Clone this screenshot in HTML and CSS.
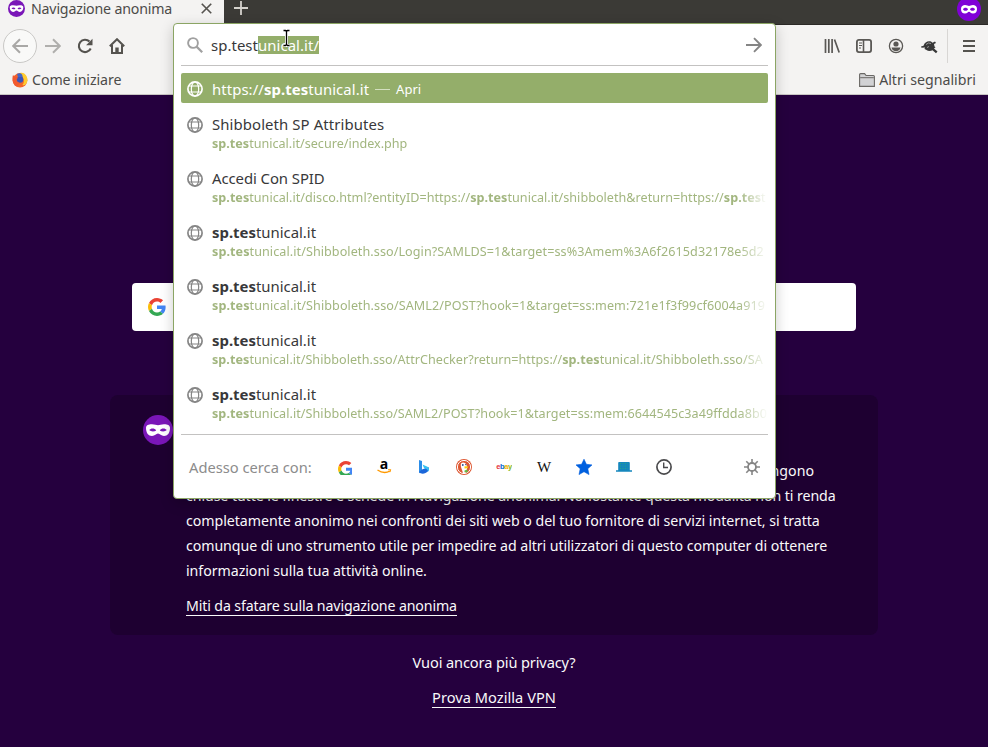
FILE: index.html
```
<!DOCTYPE html>
<html lang="it">
<head>
<meta charset="utf-8">
<title>Navigazione anonima</title>
<link rel="stylesheet" href="styles.css">
</head>
<body>
<svg class="defs" width="0" height="0">
  <symbol id="globe" viewBox="0 0 16 16"><g fill="none" stroke="currentColor" stroke-width="1.2"><circle cx="8" cy="8" r="7.1" stroke-width="1.7"/><ellipse cx="8" cy="8" rx="3.7" ry="7"/><path d="M2 5h12M2 11h12"/></g></symbol>
  <symbol id="google" viewBox="0 0 48 48"><path fill="#EA4335" d="M24 9.500c3.500 0 6.700 1.200 9.200 3.600l6.900-6.900C35.900 2.400 30.500 0 24 0 14.600 0 6.500 5.400 2.600 13.200l8 6.200C12.400 13.700 17.700 9.500 24 9.500z"/><path fill="#4285F4" d="M47 24.500c0-1.600-.2-3.100-.4-4.500H24v9h12.900c-.6 3-2.200 5.500-4.700 7.200l7.700 6C44.400 38 47 31.800 47 24.500z"/><path fill="#FBBC05" d="M10.500 28.600c-.5-1.500-.8-3-.8-4.600s.3-3.100.8-4.600l-8-6.200C.9 16.500 0 20.100 0 24s.9 7.500 2.600 10.800l7.900-6.200z"/><path fill="#34A853" d="M24 48c6.500 0 11.900-2.100 15.900-5.800l-7.700-6c-2.200 1.500-4.900 2.300-8.200 2.300-6.300 0-11.600-4.200-13.500-9.900l-7.900 6.200C6.500 42.600 14.600 48 24 48z"/></symbol>
  <symbol id="mask" viewBox="0 0 30 30"><circle cx="15" cy="15" r="15" fill="#7a16b8"/><path fill="#fff" fill-rule="evenodd" d="M3 13C3 10 6 9.200 9 9.300c2.500.1 4.500 1 6 1s3.500-.9 6-1c3-.1 6 .7 6 3.700 0 5-2.500 8-6 8-3 0-4-2.500-6-2.500S12 21 9 21c-3.500 0-6-3-6-8zM6.200 15c1.500 1.700 5 1.900 7 .4-1.500-2.500-5.200-2.600-7-.4zM23.800 15c-1.500 1.700-5 1.900-7 .4 1.500-2.500 5.200-2.600 7-.4z"/></symbol>
</svg>
<header class="chrome">
  <div class="tabs">
    <div class="tab">
      <svg class="tab-icon"><use href="#mask"/></svg>
      <span class="t-tab">Navigazione anonima</span>
      <svg class="tab-close" viewBox="0 0 10 10"><path d="M.7.7l8.600 8.600M9.300.7L.7 9.300" stroke="#55534f" stroke-width="1.500"/></svg>
    </div>
    <svg class="tab-new" viewBox="0 0 14 14"><path d="M7 0v14M0 7h14" stroke="#d5d2cd" stroke-width="1.800"/></svg>
    <svg class="private" viewBox="0 0 24 24"><circle cx="12" cy="12" r="12" fill="#8000d7"/><path fill="#fff" fill-rule="evenodd" d="M4 12c0-3 2-4 4-4s3 1 4 1 2-1 4-1 4 1 4 4-1.500 4.500-4 4.500-2.500-1.800-4-1.800-1.500 1.800-4 1.800S4 15 4 12zm2 .3c1 2 4 2 5 0-1-2-4-2-5 0zm7 0c1 2 4 2 5 0-1-2-4-2-5 0z"/></svg>
  </div>
  <div class="nav">
    <span class="back"><svg width="16" height="16" viewBox="0 0 16 16"><path d="M16 8H1.500M8 1.200L1.200 8 8 14.800" fill="none" stroke="#a9a8a6" stroke-width="2"/></svg></span>
    <svg class="i16 fwd" viewBox="0 0 16 16"><path d="M0 8h14.500M8 1.200L14.800 8 8 14.800" fill="none" stroke="#b0afad" stroke-width="2"/></svg>
    <svg class="i16 reload" viewBox="0 0 16 16"><path d="M13.700 10.500A6.200 6.200 0 1 1 12.500 3.600" fill="none" stroke="#55534f" stroke-width="2.100"/><path d="M15.500.8v6.400H9.100z" fill="#55534f"/></svg>
    <svg class="i16 home" viewBox="0 0 16 16"><path d="M.8 8.300L8 1.200l7.200 7.100M3 7v8h10V7" fill="none" stroke="#55534f" stroke-width="2"/><path d="M6.300 15V9.500h3.400V15z" fill="#55534f"/></svg>
    <div class="tools">
      <svg class="i16" viewBox="0 0 16 16"><path d="M1.500 1v14M4.800 1v14M8.100 1v14M10.500 1.500l4.700 13" fill="none" stroke="#5a5855" stroke-width="1.700"/></svg>
      <svg class="i16" viewBox="0 0 16 16"><rect x=".9" y="1.900" width="14.200" height="12.200" rx="2" fill="none" stroke="#5a5855" stroke-width="1.800"/><path d="M7.500 2v12" stroke="#5a5855" stroke-width="1.600"/><path d="M3 5h3M3 7.500h3M3 10h2" stroke="#5a5855"/></svg>
      <svg class="i16" viewBox="0 0 16 16"><circle cx="8" cy="8" r="6.600" fill="none" stroke="#5a5855" stroke-width="1.300"/><circle cx="8" cy="6" r="2.600" fill="#5a5855"/><path d="M3.500 9.500h9c-.5 2.500-2.400 3.700-4.500 3.700S4 12 3.500 9.500z" fill="#5a5855"/></svg>
      <svg class="bug" viewBox="0 0 18 16"><path fill="#383838" d="M1 8.500l2.500-.8C4.500 4 8 2.500 11 3.500l1.500 1.300 2.500-1.300 1 1.500-2 1 .5 2.500 1 .8L14 10.500l3.500 3-1.500 1.700-3.500-3c-2 1.200-4.500 1-6-.2L4.500 11l.5-1.500-3.500.3z"/><path d="M6 6.500q2.500-2.500 5-1M7 9.500l2-1" stroke="#999" fill="none"/></svg>
      <i class="bar"></i>
      <svg class="i16" viewBox="0 0 16 16"><path d="M2 3h12M2 8h12M2 13h12" stroke="#55534f" stroke-width="2"/></svg>
    </div>
  </div>
  <div class="marks">
    <svg class="i16" viewBox="0 0 16 16"><circle cx="8" cy="8.300" r="7.300" fill="#f4652b"/><path d="M8 1c4-1.500 8 3 7.400 8-.5 3-3 5-5 4 3-3 1-8-2.400-12z" fill="#ffcb2e"/><circle cx="8" cy="7.500" r="3.300" fill="#3a55b9"/><path d="M5 2C8 0 11 2 10.500 5L6 5z" fill="#4167c9"/><path d="M1 3c1 1.500 3 1.500 5 2.500L4 8.500l4 3-3.500 3C0 12 0 6 1 3z" fill="#f1592f"/></svg>
    <span class="t-come">Come iniziare</span>
    <svg class="folder" viewBox="0 0 16 14"><path d="M.6 13.400V1.600q0-1 1-1h4l1.500 1.900h7.300q1 0 1 1v9.900z" fill="#d2d2d4" stroke="#6a6865" stroke-width="1.100"/><path d="M1.200 4.700h13.600" stroke="#6a6865"/></svg>
    <span class="t-altri">Altri segnalibri</span>
  </div>
</header>
<main class="page">
  <div class="search"><svg width="18" height="18"><use href="#google"/></svg></div>
  <section class="info">
    <svg class="info-mask"><use href="#mask"/></svg>
    <div class="info-text">
      <span class="l l1">Firefox cancella la cronologia di ricerca quando viene chiuso o vengono</span>
      <span class="l l2">chiuse tutte le finestre e schede in Navigazione anonima. Nonostante questa modalità non ti renda</span>
      <span class="l l3">completamente anonimo nei confronti dei siti web o del tuo fornitore di servizi internet, si tratta</span>
      <span class="l l4">comunque di uno strumento utile per impedire ad altri utilizzatori di questo computer di ottenere</span>
      <span class="l l5">informazioni sulla tua attività online.</span>
      <a class="link t-miti">Miti da sfatare sulla navigazione anonima</a>
    </div>
  </section>
  <div class="more t-vuoi">Vuoi ancora più privacy?</div>
  <div class="more"><a class="link t-vpn">Prova Mozilla VPN</a></div>
</main>
<div class="popup">
  <div class="url">
    <svg class="i16 lens" viewBox="0 0 16 16"><circle cx="6" cy="6" r="4.900" fill="none" stroke="#a0a0a0" stroke-width="1.900"/><path d="M9.600 9.600l5.600 5.600" stroke="#a0a0a0" stroke-width="2.200"/></svg>
    <span class="typed">sp.test</span><span class="sel">unical.it/</span>
    <svg class="i16 go" viewBox="0 0 16 16"><path d="M0 8h14.500M8 1.200L14.800 8 8 14.800" fill="none" stroke="#858585" stroke-width="1.900"/></svg>
  </div>
  <div class="first"><svg class="globe"><use href="#globe"/></svg><span class="t-https">https://<b>sp.tes</b>tunical.it</span><i class="dash"></i><span class="apri">Apri</span></div>
  <div class="rows">
  <div class="row"><svg class="globe"><use href="#globe"/></svg><div class="txt"><span class="title t-shib">Shibboleth SP Attributes</span><span class="sub"><b>sp.tes</b>tunical.it/secure/index.php</span></div></div>
  <div class="row"><svg class="globe"><use href="#globe"/></svg><div class="txt"><span class="title t-spid">Accedi Con SPID</span><span class="sub u2"><b>sp.tes</b>tunical.it/disco.html?entityID=https://<b>sp.tes</b>tunical.it/shibboleth&amp;return=https://<b>sp.tes</b>t</span></div></div>
  <div class="row"><svg class="globe"><use href="#globe"/></svg><div class="txt"><span class="title"><b>sp.tes</b>tunical.it</span><span class="sub u3"><b>sp.tes</b>tunical.it/Shibboleth.sso/Login?SAMLDS=1&amp;target=ss%3Amem%3A6f2615d32178e5d2</span></div></div>
  <div class="row"><svg class="globe"><use href="#globe"/></svg><div class="txt"><span class="title"><b>sp.tes</b>tunical.it</span><span class="sub u4"><b>sp.tes</b>tunical.it/Shibboleth.sso/SAML2/POST?hook=1&amp;target=ss:mem:721e1f3f99cf6004a919</span></div></div>
  <div class="row"><svg class="globe"><use href="#globe"/></svg><div class="txt"><span class="title"><b>sp.tes</b>tunical.it</span><span class="sub u5"><b>sp.tes</b>tunical.it/Shibboleth.sso/AttrChecker?return=https://<b>sp.tes</b>tunical.it/Shibboleth.sso/SA</span></div></div>
  <div class="row"><svg class="globe"><use href="#globe"/></svg><div class="txt"><span class="title"><b>sp.tes</b>tunical.it</span><span class="sub u6"><b>sp.tes</b>tunical.it/Shibboleth.sso/SAML2/POST?hook=1&amp;target=ss:mem:6644545c3a49ffdda8b0</span></div></div>
  </div>
  <div class="engines">
    <span class="t-adesso">Adesso cerca con:</span>
    <svg viewBox="0 0 16 16"><svg x="2" y="2" width="12" height="12"><use href="#google"/></svg></svg>
    <svg viewBox="0 0 16 16"><text x="8" y="9.500" text-anchor="middle" class="amazon">a</text><path d="M1.500 11q6.500 4.500 12.500 1" fill="none" stroke="#f90" stroke-width="1.300"/><path d="M12 10.800l2.700-.2-.8 2.600" fill="none" stroke="#f90"/></svg>
    <svg viewBox="0 0 16 16"><path d="M3 1l3 1v10l-3 2.200z" fill="#2b8de8"/><path d="M3 13l3-2.500 6.500-2.500c1 3-.5 5-3 6-2.500 1.200-5 .8-6.500-1z" fill="#1b66d9"/><path d="M6.500 5.500l5 2.300c2 1.500 2 3.500.5 5 0-2-1-2.800-4-3.800z" fill="#35c1f1"/></svg>
    <svg viewBox="0 0 16 16"><circle cx="8" cy="8" r="8" fill="#de5833"/><circle cx="8" cy="8" r="6.600" fill="#de5833" stroke="#fff" stroke-width="1"/><path d="M5 4.500C6.500 2.500 10 3.500 10.500 6l.7 3-1.200 4.500-3 .7C6.500 11 4 7.500 5 4.500z" fill="#fff"/><path d="M8.500 7.300l4 .3-1.200 1.600-2.800.3z" fill="#fdd20a"/><path d="M8.500 11.500l3-1v3l-3-.5z" fill="#65bc46"/><circle cx="6.800" cy="6" r=".9" fill="#2d4f8e"/><circle cx="9.700" cy="5.600" r=".7" fill="#2d4f8e"/></svg>
    <svg viewBox="0 0 16 16"><text x="8" y="10" text-anchor="middle" class="ebay"><tspan fill="#e53238">e</tspan><tspan fill="#0064d2">b</tspan><tspan fill="#f5af02">a</tspan><tspan fill="#86b817">y</tspan></text></svg>
    <svg viewBox="0 0 16 16"><text x="8" y="13" text-anchor="middle" class="wiki">W</text></svg>
    <svg viewBox="0 0 16 16"><path d="M8 .2l2.400 5.100 5.600.6-4.200 3.800 1.200 5.900L8 12.700l-5 2.900 1.200-5.900L0 5.900l5.600-.6z" fill="#0060df" stroke="#0060df" stroke-width=".6" stroke-linejoin="round"/></svg>
    <svg viewBox="0 0 16 16"><path d="M3 3h10q.8 0 .8 1v7.300H16v1.500H0v-1.500h2.200V4q0-1 .8-1z" fill="#1587bd"/><path d="M4 4.500h8M4 7h8M4 9.500h8" stroke="#2cae7c" stroke-width=".8" stroke-dasharray="1 1.500"/></svg>
    <svg viewBox="0 0 16 16"><circle cx="8" cy="8" r="7.100" fill="none" stroke="#4a4a4c" stroke-width="1.700"/><path d="M7.700 3.500v5h4.300" fill="none" stroke="#4a4a4c" stroke-width="1.400"/></svg>
    <svg class="gear" viewBox="0 0 16 16"><circle cx="8" cy="8" r="4" fill="none" stroke="#858585" stroke-width="1.800"/><path d="M8 0v4M8 12v4M0 8h4M12 8h4M2.300 2.300l2.900 2.900M10.800 10.800l2.900 2.900M13.700 2.300l-2.900 2.900M5.200 10.800l-2.900 2.900" stroke="#858585" stroke-width="1.600"/></svg>
  </div>
  <svg class="caret" viewBox="0 0 9 18"><path d="M1.500 1.500h2l1 1 1-1h2M4.500 2v14M1.500 16.500h2l1-1 1 1h2" fill="none" stroke="#fff" stroke-width="3"/><path d="M1.500 1.500h2l1 1 1-1h2M4.500 2v14M1.500 16.500h2l1-1 1 1h2" fill="none" stroke="#000" stroke-width="1.300"/></svg>
</div>
</body>
</html>
```
FILE: styles.css
```
*{box-sizing:border-box}
body{margin:0;width:988px;height:747px;overflow:hidden;position:relative;background:#25003e;font:14.200px/20px "Noto Sans",sans-serif;color:#4c4b49;white-space:nowrap}
svg{display:block;flex:none}
b{font-weight:700}
.defs{position:absolute}
.i16{width:16px;height:16px}
.chrome{height:95px;background:#f4f3f2;border-bottom:1px solid #c9c6c4}
.tabs{height:25px;background:#3b3a36;border-bottom:1px solid #2b2926;display:flex;align-items:flex-start}
.tab{width:224px;height:25px;background:#f4f3f2;display:flex;align-items:flex-start;padding-left:8px}
.tab-icon{width:17px;height:17px;margin-right:6px}
.t-tab{width:141px;margin-top:-1px;letter-spacing:-.19px}
.tab-close{width:11px;height:11px;margin:3px 0 0 29px}
.tab-new{width:14px;height:14px;margin:1px 0 0 10px}
.private{width:24px;height:24px;margin:-3px 7px 0 auto}
.nav{height:41px;display:flex;align-items:center;padding-left:3px}
.back{width:34px;height:34px;border:1px solid #c9c8c6;border-radius:50%;background:#f9f9f8;display:flex;align-items:center;justify-content:center}
.fwd{margin-left:8px}
.reload{margin-left:16px}
.home{margin-left:16px}
.tools{margin-left:auto;display:flex;align-items:center;gap:16px;padding-right:11px}
.bug{width:18px;height:16px;margin-right:-7px}
.bar{width:1px;height:34px;background:#d8d6d4;margin-right:-3px}
.marks{height:28px;display:flex;align-items:center;padding:0 12px}
.t-come{margin-left:4px;letter-spacing:-.08px}
.folder{width:16px;height:14px;margin-left:auto;margin-right:4px}
.page{padding-top:188px;display:flex;flex-direction:column;align-items:center;color:#f9f9fa}
.search{width:724px;height:48px;border-radius:4px;background:#fff;display:flex;align-items:center;padding-left:16px}
.info{width:768px;height:240px;margin-top:64px;border-radius:8px;background:#1e0031;display:flex;padding:20px 0 0 33px}
.info-mask{width:30px;height:30px}
.info-text{margin:43px 0 0 13px;line-height:25px}
.l{display:block}
.l1{width:628px;text-align:right}
.l2{letter-spacing:-.087px}
.l3{letter-spacing:-.043px}
.l4{letter-spacing:-.08px}
.l5{letter-spacing:-.05px}
.link{display:inline-block;line-height:19px;border-bottom:1px solid #f9f9fa}
.t-miti{margin-top:13px;letter-spacing:-.137px}
.more{margin-top:15px;line-height:20px;font-size:14.600px}
.t-vuoi{margin-top:17px;letter-spacing:-.12px}
.t-vpn{letter-spacing:.04px}
.popup{position:absolute;top:23px;left:173px;width:603px;height:476px;background:#fff;border:1px solid #8ba564;border-radius:4px;padding:0 7px;box-shadow:0 4px 14px rgba(0,0,0,.2);font-size:14.900px;color:#38383a}
.url{height:42px;border-bottom:1px solid #c3c2c1;display:flex;align-items:center;padding:0 6px}
.typed{margin-left:8px;letter-spacing:.06px}
.sel{height:18px;line-height:18px;background:#94ae6a;color:#fff;letter-spacing:.07px}
.go{margin-left:auto}
.first{height:30px;margin-top:7px;border-radius:2px;background:#94ae6a;color:#fff;display:flex;align-items:center;padding:2px 6px 0}
.globe{width:16px;height:16px;margin-right:9px}
.t-https{letter-spacing:.07px}
.dash{width:15px;height:1px;background:#d3dfbf;margin:0 6px}
.apri{font-size:13px}
.row{height:54px;display:flex;padding:14px 0 0 6px;color:#858585}
.txt{width:556px;margin-top:-2px;color:#38383a}
.title,.sub{display:block;line-height:19px}
.t-shib{letter-spacing:.1px}
.t-spid{letter-spacing:-.07px}
.sub{font-size:12.600px;color:#a2b67f;overflow:hidden;-webkit-mask-image:linear-gradient(to right,#000 526px,transparent 556px);mask-image:linear-gradient(to right,#000 526px,transparent 556px)}
.u2{letter-spacing:.02px}
.u3{letter-spacing:.07px}
.u4{letter-spacing:.08px}
.u5{letter-spacing:.04px}
.u6{letter-spacing:.05px}
.engines{height:64px;margin-top:7px;border-top:1px solid #c3c2c1;display:flex;align-items:center;gap:24px;padding:1px 8px 0}
.engines svg{width:16px;height:16px}
.t-adesso{width:123px;font-size:14.700px;color:#8c8c8c}
.engines .gear{margin-left:auto}
.amazon{font:bold 14px "Open Sans",sans-serif;fill:#000}
.ebay{font:bold 7.500px "Liberation Sans",sans-serif;letter-spacing:-.4px}
.wiki{font:15px "Liberation Serif",serif;fill:#111}
.caret{position:absolute;left:108px;top:5px;width:9px;height:18px}
```
